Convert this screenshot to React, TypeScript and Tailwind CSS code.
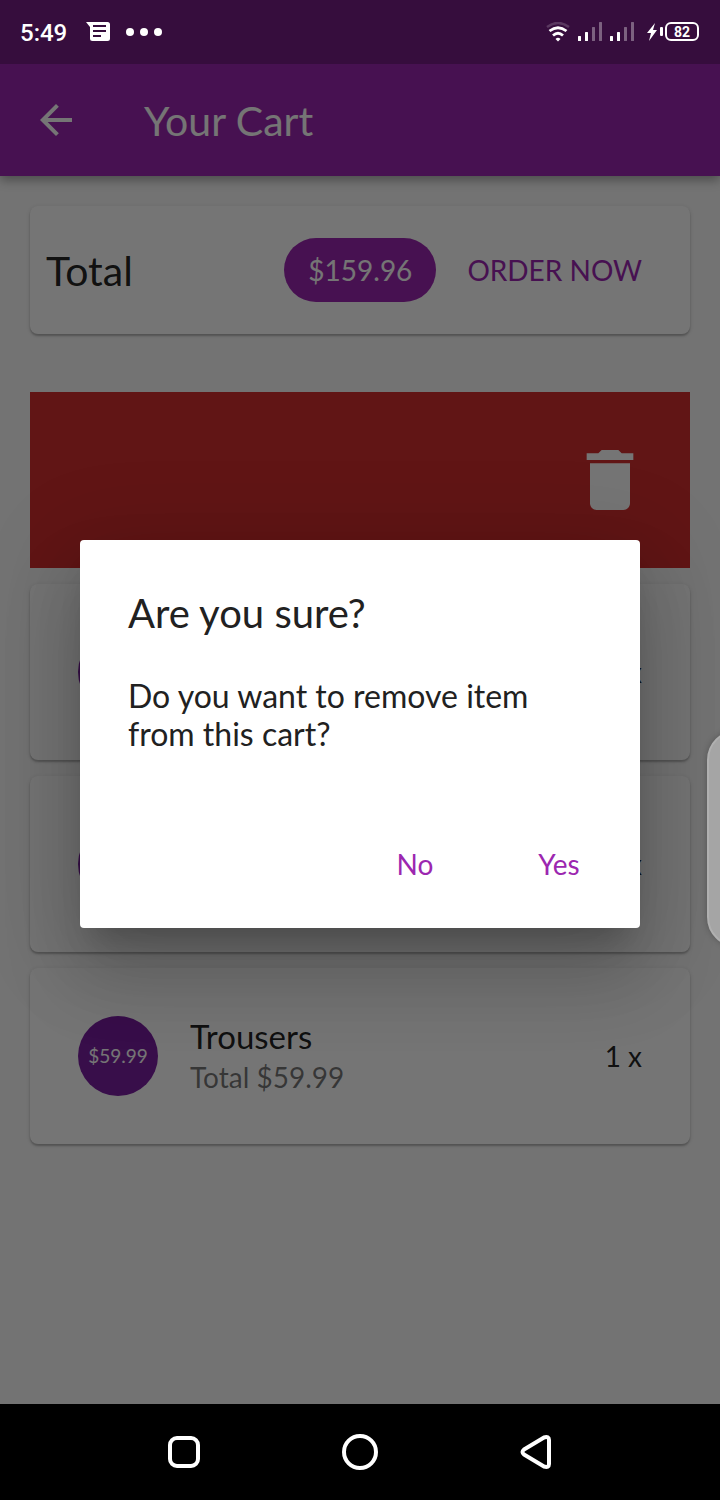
import React from "react";

type CartItem = { price?: string; title?: string; total?: string; quantity: string };

const items: CartItem[] = [
  { quantity: "1 x" },
  { quantity: "1 x" },
  { price: "$59.99", title: "Trousers", total: "Total $59.99", quantity: "1 x" },
];

const cardClass =
  "rounded-lg bg-white shadow-[0_2px_2px_rgba(0,0,0,0.22),0_1px_4px_rgba(0,0,0,0.12)]";

function SignalIcon() {
  return (
    <svg width="25" height="20" viewBox="0 0 25 20" fill="white" aria-hidden="true">
      <rect x="0" y="14" width="3" height="5" rx="0.5" />
      <rect x="7" y="10" width="3" height="9" rx="0.5" />
      <rect x="14" y="5" width="3" height="14" rx="0.5" opacity="0.35" />
      <rect x="21" y="0" width="3" height="19" rx="0.5" opacity="0.35" />
    </svg>
  );
}

function StatusBar() {
  return (
    <header className="flex h-16 items-center justify-between bg-[#360d3d] px-5 font-['Roboto',sans-serif] text-white">
      <div className="flex items-center">
        <span className="w-[66px] pt-0.5 text-2xl font-medium">5:49</span>
        <svg width="24" height="20" viewBox="0 0 24 20" aria-hidden="true">
          <path d="M0 0H21.500Q24 0 24 2.500V16.500Q24 19 21.500 19H6.500Q4 19 4 16.500V5Z" fill="white" />
          <path d="M7 4h13M7 9h13M7 14h8" stroke="#360d3d" strokeWidth="2" />
        </svg>
        <svg className="ml-4" width="36" height="8" viewBox="0 0 36 8" fill="white" aria-hidden="true">
          <circle cx="4" cy="4" r="4" />
          <circle cx="18" cy="4" r="4" />
          <circle cx="32" cy="4" r="4" />
        </svg>
      </div>
      <div className="flex items-center pr-px">
        <svg className="mr-2" width="24" height="20" viewBox="0 0 24 20" fill="none" stroke="white" aria-hidden="true">
          <path d="M1 5Q12 -3 23 5" strokeWidth="2.500" opacity="0.18" />
          <path d="M3.500 9Q12 2.500 20.500 9" strokeWidth="2.800" />
          <path d="M7 13.500Q12 9 17 13.500" strokeWidth="2.800" />
          <path d="M9.500 17Q12 14.500 14.500 17L12 19.500Z" fill="white" stroke="none" />
        </svg>
        <SignalIcon />
        <span className="w-[7px]" />
        <SignalIcon />
        <svg className="ml-3" width="18" height="20" viewBox="0 0 18 20" fill="white" aria-hidden="true">
          <path d="M8 1L0 11H4L2 19L10 8H6Z" />
          <rect x="13" y="5" width="3" height="9" rx="1" />
        </svg>
        <span className="mb-px flex h-[19px] w-[34px] items-center justify-center rounded-md border-2 border-white text-sm font-bold">
          82
        </span>
      </div>
    </header>
  );
}

function AppBar() {
  return (
    <div className="relative flex h-28 items-center bg-[#9c27b0] px-10 text-white shadow-[0_4px_10px_rgba(0,0,0,0.35)]">
      <button type="button" aria-label="Back" className="mr-[72px]">
        <svg width="32" height="32" viewBox="4 4 16 16" fill="currentColor" aria-hidden="true">
          <path d="M20 11H7.830l5.590-5.590L12 4l-8 8 8 8 1.410-1.410L7.830 13H20v-2z" />
        </svg>
      </button>
      <h1 className="pt-0.5 text-[41px] leading-[48px]">Your Cart</h1>
    </div>
  );
}

function ItemCard({ item }: { item: CartItem }) {
  return (
    <li className={`${cardClass} flex h-44 items-center px-12`}>
      <span className="flex size-20 shrink-0 items-center justify-center rounded-full bg-[#7b1fa2] text-[19px] text-white">
        {item.price}
      </span>
      <div className="ml-8 flex-1">
        {item.title && <p className="text-[33px] leading-[42px] text-black/87">{item.title}</p>}
        {item.total && <p className="text-[28px] leading-10 text-black/54">{item.total}</p>}
      </div>
      <span className="text-[28px] text-black/87">{item.quantity}</span>
    </li>
  );
}

function ConfirmDialog() {
  return (
    <div className="absolute inset-0 flex items-center justify-center bg-black/54 px-20">
      <div
        role="dialog"
        aria-modal="true"
        aria-labelledby="dialog-title"
        className="w-full rounded bg-white px-12 pt-[49px] shadow-[0_22px_30px_-14px_rgba(0,0,0,0.2),0_48px_76px_6px_rgba(0,0,0,0.14),0_18px_92px_16px_rgba(0,0,0,0.12)]"
      >
        <h2 id="dialog-title" className="text-[40px] leading-[48px] text-[#212121]">
          Are you sure?
        </h2>
        <p className="mt-10 text-[32px] leading-[38px] text-[#212121]">
          Do you want to remove item from this cart?
        </p>
        <div className="-mr-[31px] mt-[47px] flex h-32 items-center justify-end gap-4 text-[28px] text-[#9c27b0]">
          <button type="button" className="h-18 w-32">No</button>
          <button type="button" className="h-18 w-32">Yes</button>
        </div>
      </div>
    </div>
  );
}

function NavigationBar() {
  return (
    <nav className="grid h-24 grid-cols-[1fr_176px_176px_176px_1fr] place-items-center bg-black">
      <button type="button" aria-label="Recent apps" className="col-start-2">
        <svg width="32" height="32" viewBox="0 0 32 32" fill="none" stroke="white" strokeWidth="4">
          <rect x="2" y="2" width="28" height="28" rx="7" />
        </svg>
      </button>
      <button type="button" aria-label="Home">
        <svg width="36" height="36" viewBox="0 0 36 36" fill="none" stroke="white" strokeWidth="4">
          <circle cx="18" cy="18" r="16" />
        </svg>
      </button>
      <button type="button" aria-label="Back">
        <svg width="32" height="36" viewBox="0 0 32 36" fill="none" stroke="white" strokeWidth="4" strokeLinejoin="round">
          <path d="M24 3.500L4 15.500Q1 18 4 20.500L24 32.500Q29 34 29 30V6Q29 2 24 3.500Z" />
        </svg>
      </button>
    </nav>
  );
}

export default function App() {
  return (
    <div className="flex min-h-screen flex-col font-['Lato',sans-serif]">
      <StatusBar />
      <div className="relative flex flex-1 flex-col overflow-hidden bg-[#fafafa]">
        <AppBar />
        <main className="p-[30px]">
          <section className={`${cardClass} flex h-32 items-center pl-4 pr-12`}>
            <h2 className="flex-1 pt-0.5 text-[41px] leading-[48px] text-black/87">Total</h2>
            <span className="flex h-16 items-center rounded-full bg-[#9c27b0] px-6 text-[28px] text-white">
              $159.96
            </span>
            <button type="button" className="ml-[31px] text-[28px] text-[#9c27b0]">ORDER NOW</button>
          </section>
          <div className="mt-[58px] flex h-44 items-center justify-end bg-[#d32f2f] pr-10">
            <svg width="80" height="80" viewBox="0 0 24 24" fill="white" aria-hidden="true">
              <path d="M6 19c0 1.100.9 2 2 2h8c1.100 0 2-.9 2-2V7H6v12zM19 4h-3.500l-1-1h-5l-1 1H5v2h14V4z" />
            </svg>
          </div>
          <ul className="mt-4 flex flex-col gap-4">
            {items.map((item, index) => (
              <ItemCard key={index} item={item} />
            ))}
          </ul>
        </main>
        <ConfirmDialog />
        <div className="absolute -right-[51px] top-[666px] h-[217px] w-16 rounded-[30px] border-2 border-[#b0b0b0] bg-[#a5a5a5] shadow-[0_0_6px_rgba(0,0,0,0.25)]" />
      </div>
      <NavigationBar />
    </div>
  );
}
